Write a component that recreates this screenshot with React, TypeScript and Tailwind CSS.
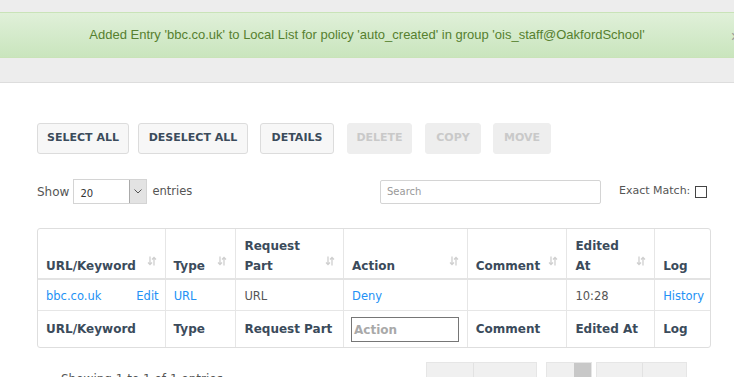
import React from "react";

const SortIcon = () => (
  <svg width="10" height="10" viewBox="0 0 10 10" className="absolute right-[8px] top-[27px]">
    <path d="M3 0.5 V8.5 M1 6.5 L3 8.5 L5 6.5" stroke="#cfcfcf" strokeWidth="1.3" fill="none" />
    <path d="M7 9.5 V1.5 M5 3.5 L7 1.5 L9 3.5" stroke="#cfcfcf" strokeWidth="1.3" fill="none" />
  </svg>
);

const Btn = ({ label, disabled, className = "" }: { label: string; disabled?: boolean; className?: string }) => (
  <div
    className={
      "h-[31px] flex items-center justify-center rounded-[3px] border text-[11px] font-bold uppercase " +
      (disabled
        ? "bg-[#eeeeee] border-[#eeeeee] text-[#c9c9c9] "
        : "bg-[#f7f7f7] border-[#dcdcdc] text-[#3b4b5b] ") +
      className
    }
  >
    {label}
  </div>
);

export default function App() {
  const cols = ["w-[127px]", "w-[71px]", "w-[108px]", "w-[124px]", "w-[100px]", "w-[88px]", "w-[56px]"];
  return (
    <div className="w-[734px] h-[377px] overflow-hidden bg-white font-['DejaVu_Sans',sans-serif] text-[#555]">
      {/* top message area */}
      <div className="bg-[#ededed] pt-[12px] h-[83px] border-b border-[#dddddd]">
        <div className="relative h-[46px] border-y border-[#c9e3b8] bg-gradient-to-b from-[#e0f0d9] to-[#c9e5bd] flex items-center justify-center">
          <span className="font-['Liberation_Sans',sans-serif] text-[13px] text-[#56802f] whitespace-nowrap">
            Added Entry 'bbc.co.uk' to Local List for policy 'auto_created' in group 'ois_staff@OakfordSchool'
          </span>
          <span className="absolute right-[-6px] top-[12px] text-[16px] text-[#9a9a9a] font-['Liberation_Sans',sans-serif]">×</span>
        </div>
      </div>

      <div className="pl-[37px] pr-[23px] pt-[40px]">
        {/* buttons */}
        <div className="flex">
          <Btn label="Select All" className="w-[92px]" />
          <Btn label="Deselect All" className="w-[110px] ml-[9px]" />
          <Btn label="Details" className="w-[74px] ml-[12px]" />
          <Btn label="Delete" disabled className="w-[65px] ml-[13px]" />
          <Btn label="Copy" disabled className="w-[56px] ml-[13px]" />
          <Btn label="Move" disabled className="w-[58px] ml-[12px]" />
        </div>

        {/* show / search row */}
        <div className="flex items-center h-[25px] mt-[25px] whitespace-nowrap">
          <div className="w-[343px] shrink-0 flex items-center">
            <span className="text-[12px] text-[#555]">Show</span>
            <div className="ml-[4px] w-[74px] h-[25px] flex border border-[#d4d4d4] bg-white">
              <span className="flex-1 pl-[6px] pt-[6px] text-[10px] text-[#333]">20</span>
              <span className="w-[17px] h-[23px] bg-[#e3e3e3] border-l border-[#aaaaaa] flex items-center justify-center">
                <svg width="8" height="5" viewBox="0 0 8 5">
                  <path d="M0.5 0.5 L4 4 L7.5 0.5" stroke="#555" strokeWidth="1" fill="none" />
                </svg>
              </span>
            </div>
            <span className="ml-[5px] text-[11.5px] text-[#555]">entries</span>
          </div>
          <div className="shrink-0 w-[221px] h-[24px] border border-[#d4d4d4] rounded-[2px] flex items-center pl-[6px] text-[10px] text-[#999]">
            Search
          </div>
          <span className="shrink-0 ml-[18px] text-[11px] text-[#555]">Exact Match:</span>
          <span className="shrink-0 ml-[5px] w-[12px] h-[12px] border border-[#444] bg-white"></span>
        </div>

        {/* table */}
        <div className="mt-[24px] w-[674px] border border-[#dedede] rounded-[3px]">
          <div className="flex h-[51px] border-b-2 border-[#e3e3e3] text-[12px] font-bold text-[#3b4b5b] leading-[20px]">
            {[
              ["URL/Keyword", true],
              ["Type", true],
              ["Request Part", true],
              ["Action", true],
              ["Comment", true],
              ["Edited At", true],
              ["Log", false],
            ].map(([t, s], i) => (
              <div
                key={i}
                className={
                  cols[i] +
                  " relative flex items-end pl-[8px] pr-[20px] pb-[2px] " +
                  (i > 0 ? "border-l border-[#e6e6e6]" : "")
                }
              >
                <span>{t as string}</span>
                {s ? <SortIcon /> : null}
              </div>
            ))}
          </div>
          <div className="flex h-[31px] border-b border-[#e6e6e6] text-[11.5px] items-stretch pt-[4px]">
            <div className={cols[0] + " flex items-center justify-between pl-[8px] pr-[6px]"}>
              <span className="text-[#2391f5]">bbc.co.uk</span>
              <span className="text-[#2391f5]">Edit</span>
            </div>
            <div className={cols[1] + " flex items-center pl-[8px] border-l border-[#e6e6e6] text-[#2391f5] -mt-[4px] pt-[4px]"}>URL</div>
            <div className={cols[2] + " flex items-center pl-[8px] border-l border-[#e6e6e6] text-[#555] -mt-[4px] pt-[4px]"}>URL</div>
            <div className={cols[3] + " flex items-center pl-[8px] border-l border-[#e6e6e6] text-[#2391f5] -mt-[4px] pt-[4px]"}>Deny</div>
            <div className={cols[4] + " flex items-center pl-[8px] border-l border-[#e6e6e6] -mt-[4px] pt-[4px]"}></div>
            <div className={cols[5] + " flex items-center pl-[8px] border-l border-[#e6e6e6] text-[#555] -mt-[4px] pt-[4px]"}>10:28</div>
            <div className={cols[6] + " flex items-center pl-[8px] border-l border-[#e6e6e6] text-[#2391f5] -mt-[4px] pt-[4px]"}>History</div>
          </div>
          <div className="flex h-[36px] text-[12px] font-bold text-[#3b4b5b]">
            <div className={cols[0] + " flex items-center pl-[8px]"}>URL/Keyword</div>
            <div className={cols[1] + " flex items-center pl-[8px] border-l border-[#e6e6e6]"}>Type</div>
            <div className={cols[2] + " flex items-center pl-[8px] border-l border-[#e6e6e6]"}>Request Part</div>
            <div className={cols[3] + " flex items-center pl-[7px] border-l border-[#e6e6e6]"}>
              <div className="w-[108px] h-[25px] border border-[#767676] flex items-center pl-[2px] pt-[2px] text-[#a9a9a9]">
                Action
              </div>
            </div>
            <div className={cols[4] + " flex items-center pl-[8px] border-l border-[#e6e6e6]"}>Comment</div>
            <div className={cols[5] + " flex items-center pl-[8px] border-l border-[#e6e6e6]"}>Edited At</div>
            <div className={cols[6] + " flex items-center pl-[8px] border-l border-[#e6e6e6]"}>Log</div>
          </div>
        </div>

        {/* footer */}
        <div className="flex mt-[14px]">
          <div className="w-[389px] shrink-0 pl-[24px] pt-[8px] text-[12px] text-[#555] whitespace-nowrap">Showing 1 to 1 of 1 entries</div>
          <div className="flex h-[30px] text-[12px] text-[#999]">
            <div className="flex border border-[#e6e6e6] bg-[#f0f0f0]">
              <div className="w-[46px] pt-[18px] text-center">First</div>
              <div className="w-[63px] pt-[18px] text-center border-l border-[#e2e2e2]">Previous</div>
            </div>
            <div className="ml-[9px] flex border border-[#e6e6e6] bg-[#f0f0f0]">
              <div className="w-[27px] pt-[18px]"></div>
              <div className="w-[17px] bg-[#c8c8c8] pt-[18px] text-center">1</div>
            </div>
            <div className="ml-[4px] flex border border-[#e6e6e6] bg-[#f0f0f0]">
              <div className="w-[45px] pt-[18px] text-center">Next</div>
              <div className="w-[44px] pt-[18px] text-center border-l border-[#e2e2e2]">Last</div>
            </div>
          </div>
        </div>
      </div>
    </div>
  );
}
